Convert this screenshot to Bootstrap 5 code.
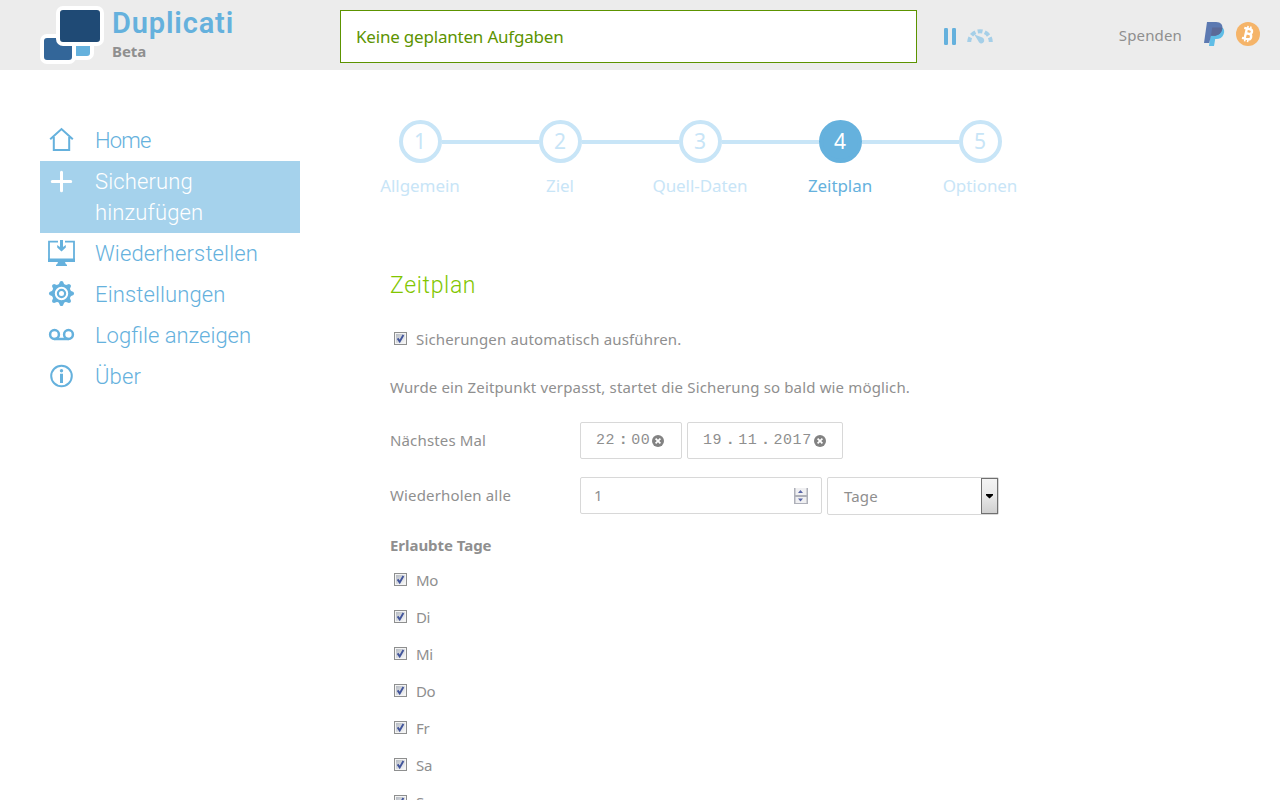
<!DOCTYPE html>
<html lang="de">
<head>
<meta charset="utf-8">
<meta name="viewport" content="width=device-width, initial-scale=1">
<title>Duplicati</title>
<link rel="stylesheet" href="https://cdn.jsdelivr.net/npm/bootstrap@5.3.0/dist/css/bootstrap.min.css">
<style>
body{font-family:"Noto Sans",sans-serif;font-size:15px;line-height:20px;letter-spacing:.15px;color:#8f8f8f;background:#fff;height:800px;overflow:hidden}
.topbar{height:70px;background:#ececec;padding-left:40px;padding-right:20px}
.brand-box{width:300px}
.brand-text{padding-top:7px}
.brand-name{font-family:Roboto,sans-serif;font-size:29px;line-height:32px;font-weight:600;color:#65b1dd;letter-spacing:.85px}
.brand-sub{line-height:18px;font-weight:700;margin-top:3px;letter-spacing:-.1px}
.status-box{width:577px;height:53px;margin-top:10px;border:1px solid #5c9300;background:#fff;color:#5c9300;font-size:17px;padding-left:15px;letter-spacing:-.2px}
.controls{margin:27px 0 0 27px;height:20px}
.donate{padding-top:22px;height:47px}
.donate-text{margin:3px 21px 0 0}
.side{width:260px;margin-left:40px;padding-top:50px;font-family:Roboto,sans-serif;font-size:22px;line-height:31px;font-weight:300;letter-spacing:.13px}
.side a{color:#65b1dd;padding:5px 8px;text-decoration:none;gap:20px}
.side a.active{background:#a5d2ec;color:#fff}
.side svg{width:27px;height:31px;flex:none}
.side .tight{letter-spacing:-.8px}
.side .snug{letter-spacing:0}
.content{margin-left:50px;width:700px;padding-top:50px}
.step{width:140px;color:#c8e5f7;font-size:17px;letter-spacing:-.06px}
.ring{width:43px;height:43px;border:4px solid #c8e5f7;border-radius:50%;font-size:21px;line-height:1;flex:none}
.wire{height:4px;background:#c8e5f7;flex:1 1 0}
.wire.blank{background:none}
.step.now{color:#65b1dd}
.now .ring{background:#65b1dd;border-color:#65b1dd;color:#fff}
.step-label{margin-top:13px}
.form-area{padding-left:40px;padding-top:74px}
h1{font-family:Roboto,sans-serif;font-size:23px;line-height:32px;font-weight:300;letter-spacing:.66px;color:#82c600;margin:0}
.auto-row{margin-top:27px}
.hint{margin:28px 0 25px}
.field-label{width:190px;padding-bottom:2px}
.box{border:1px solid #d8d8d8;border-radius:2px;height:37px;background:#fff}
.time-box{width:102px;padding-left:15px}
.date-box{width:156px;padding-left:15px;margin-left:5px}
.count-box{width:242px;padding:0 13px}
.unit-box{width:172px;height:38px;padding-left:16px;margin-left:5px}
.unit-box span,.count-box span{padding-bottom:1px}
.mono{font-family:"Liberation Mono",monospace;letter-spacing:.6px}
.mono>span{padding-top:1px}
.mono svg{margin-left:2px}
.sep{display:inline-block;width:16px;text-align:center;font-weight:700;letter-spacing:0}
.repeat-row{margin-top:18px;height:38px}
.days-title{margin:20px 0 8px;font-weight:700;letter-spacing:-.04px}
.tick{width:13px;height:13px;flex:none;margin:0 9px 2px 4px}
.day{height:37px;padding-bottom:4px;letter-spacing:-.35px}
.day .tick{margin-bottom:0}
</style>
<script src="https://cdn.jsdelivr.net/npm/bootstrap@5.3.0/dist/js/bootstrap.bundle.min.js"></script>
</head>
<body>
<svg width="0" height="0" class="position-absolute">
  <defs>
    <linearGradient id="bevel" x1="0" y1="0" x2="1" y2="1"><stop offset="0" stop-color="#b5bac2"/><stop offset="1" stop-color="#fafafa"/></linearGradient>
    <linearGradient id="btn" x1="0" y1="0" x2="0" y2="1"><stop offset="0" stop-color="#f4f4f4"/><stop offset=".5" stop-color="#e8e8e8"/><stop offset="1" stop-color="#cfcfcf"/></linearGradient>
    <symbol id="check" viewBox="0 0 13 13"><rect x=".5" y=".5" width="12" height="12" fill="#f4f4f4" stroke="#8e8f8f"/><rect x="2" y="2" width="9" height="9" fill="url(#bevel)"/><path d="M3.6 6.4 5.7 9.4 9.4 3" fill="none" stroke="#42559b" stroke-width="1.9"/></symbol>
    <symbol id="clear" viewBox="0 0 12 12"><circle cx="6" cy="6" r="6" fill="#828282"/><path d="m3.6 3.6 4.8 4.8m0-4.8-4.8 4.8" stroke="#fff" stroke-width="1.7"/></symbol>
  </defs>
</svg>
<header class="topbar d-flex">
  <div class="brand-box d-flex">
    <svg width="64" height="70" viewBox="0 0 64 70"><g stroke="#fff" stroke-width="4"><rect x="32" y="36" width="20" height="22" rx="5" fill="#65b1dd"/><rect x="2" y="36" width="32" height="26" rx="5" fill="#336699"/><rect x="18" y="8" width="44" height="36" rx="5" fill="#1f4a75"/></g></svg>
    <div class="brand-text ms-2"><div class="brand-name">Duplicati</div><div class="brand-sub">Beta</div></div>
  </div>
  <div class="status-box d-flex align-items-center">Keine geplanten Aufgaben</div>
  <div class="controls d-flex">
    <svg width="50" height="20" viewBox="0 0 50 20">
      <g fill="#65b1dd"><rect y="1" width="4" height="17" rx="1.3"/><rect x="8" y="1" width="4" height="17" rx="1.3"/></g>
      <path d="M25.2 15A10.8 10.8 0 0 1 46.8 15" fill="none" stroke="#a5cfe8" stroke-width="4" stroke-dasharray="4.9 2.35"/>
      <path d="M30.3 7.5 38.4 10.6A3 3 0 1 1 34.3 14Z" fill="#a5cfe8"/>
    </svg>
  </div>
  <div class="donate d-flex ms-auto">
    <span class="donate-text">Spenden</span>
    <svg width="57" height="24" viewBox="0 0 57 24">
      <path d="M19.5 5.5C21.5 7.5 21.5 10 20.5 12.5 19.3 15.5 16.8 17 13.3 17H12.2L11 24H6L8.2 8Z" fill="#5fbde6"/>
      <path d="M4 0H13C18 0 20 3 19.3 6.7 18.5 11.5 15.2 13.7 10.6 13.7H8L6.2 21H1Z" fill="#5c79b1"/>
      <path d="M9.2 5.5H18.8Q19.5 5.7 19.3 6.7C18.5 11.5 15.2 13.7 10.6 13.7H8Z" fill="#5b6a98"/>
      <circle cx="45" cy="12" r="12" fill="#f5b469"/>
      <g transform="rotate(13 45 12)" fill="none" stroke="#fff"><path d="M42.7 6.8V17.2M40 6.9H46A2.3 2.3 0 0 1 46 11.7H43M46 11.7A2.7 2.7 0 0 1 46 17.1H40" stroke-width="2.4"/><path d="M43.3 4V7M46.3 4V7M43.3 17V20M46.3 17V20" stroke-width="1.6"/></g>
    </svg>
  </div>
</header>
<div class="d-flex">
<nav class="side">
  <a href="#" class="d-flex"><svg viewBox="0 0 27 31"><path d="M2.2 14.3 13.5 4 24.8 14.3M5.8 12V25H21.2V12" fill="none" stroke="#65b1dd" stroke-width="2"/></svg><span class="tight">Home</span></a>
  <a href="#" class="d-flex active"><svg viewBox="0 0 27 31"><path d="M4.3 15.5H22.7M13.5 6.3V24.7" stroke="#fff" stroke-width="3" stroke-linecap="round"/></svg><span>Sicherung hinzufügen</span></a>
  <a href="#" class="d-flex"><svg viewBox="0 0 27 31"><path d="M10 3.7H1V22.5H26V3.7H17" fill="none" stroke="#65b1dd" stroke-width="1.8"/><path d="M0 20.5H27V24H0ZM10 24H17L18 26.5H19V28H8V26.5H9ZM12 2H15V9L17.8 7V9.5L13.5 13.5 9.2 9.5V7L12 9Z" fill="#65b1dd"/></svg><span>Wiederherstellen</span></a>
  <a href="#" class="d-flex"><svg viewBox="0 0 27 31"><g stroke="#65b1dd" fill="none"><circle cx="13.5" cy="14.5" r="8.2" stroke-width="3"/><circle cx="13.5" cy="14.5" r="3.6" stroke-width="2.2"/></g><g fill="#65b1dd"><g id="pair"><path id="tooth" d="M10.5 6 12 2.5Q13.5 1.3 15 2.5L16.5 6Z"/><use href="#tooth" transform="rotate(180 13.5 14.5)"/></g><use href="#pair" transform="rotate(45 13.5 14.5)"/><use href="#pair" transform="rotate(90 13.5 14.5)"/><use href="#pair" transform="rotate(135 13.5 14.5)"/></g></svg><span>Einstellungen</span></a>
  <a href="#" class="d-flex"><svg viewBox="0 0 27 31"><g fill="none" stroke="#65b1dd" stroke-width="2.5"><circle cx="6.5" cy="14.5" r="4.4"/><circle cx="20.5" cy="14.5" r="4.4"/><path d="M6.5 19H20.5"/></g></svg><span class="snug">Logfile anzeigen</span></a>
  <a href="#" class="d-flex"><svg viewBox="0 0 27 31"><circle cx="13.5" cy="15" r="10.3" fill="none" stroke="#65b1dd" stroke-width="2"/><path d="M12 12.7H15V22H12Z" fill="#65b1dd"/><circle cx="13.5" cy="9.8" r="1.7" fill="#65b1dd"/></svg><span>Über</span></a>
</nav>
<main class="content">
  <div class="d-flex text-center">
    <div class="step"><div class="d-flex align-items-center"><i class="wire blank"></i><div class="ring d-flex align-items-center justify-content-center">1</div><i class="wire"></i></div><div class="step-label">Allgemein</div></div>
    <div class="step"><div class="d-flex align-items-center"><i class="wire"></i><div class="ring d-flex align-items-center justify-content-center">2</div><i class="wire"></i></div><div class="step-label">Ziel</div></div>
    <div class="step"><div class="d-flex align-items-center"><i class="wire"></i><div class="ring d-flex align-items-center justify-content-center">3</div><i class="wire"></i></div><div class="step-label">Quell-Daten</div></div>
    <div class="step now"><div class="d-flex align-items-center"><i class="wire"></i><div class="ring d-flex align-items-center justify-content-center">4</div><i class="wire"></i></div><div class="step-label">Zeitplan</div></div>
    <div class="step"><div class="d-flex align-items-center"><i class="wire"></i><div class="ring d-flex align-items-center justify-content-center">5</div><i class="wire blank"></i></div><div class="step-label">Optionen</div></div>
  </div>
  <div class="form-area">
    <h1>Zeitplan</h1>
    <div class="auto-row d-flex align-items-center"><svg class="tick"><use href="#check"/></svg>Sicherungen automatisch ausführen.</div>
    <p class="hint">Wurde ein Zeitpunkt verpasst, startet die Sicherung so bald wie möglich.</p>
    <div class="d-flex align-items-center">
      <span class="field-label">Nächstes Mal</span>
      <div class="box time-box d-flex align-items-center mono"><span>22<span class="sep">:</span>00</span><svg width="12" height="12"><use href="#clear"/></svg></div>
      <div class="box date-box d-flex align-items-center mono"><span>19<span class="sep">.</span>11<span class="sep">.</span>2017</span><svg width="12" height="12"><use href="#clear"/></svg></div>
    </div>
    <div class="repeat-row d-flex">
      <span class="field-label align-self-center">Wiederholen alle</span>
      <div class="box count-box d-flex align-items-center justify-content-between"><span>1</span>
        <svg width="14" height="16" viewBox="0 0 14 16"><path d="M0 0H14V16H0Z" fill="#aeb0b9"/><path d="M1.5 0H12.5V7H1.5ZM1.5 9H12.5V15H1.5Z" fill="#f0f0f2"/><path d="M4 5 6.5 2 9 5ZM4 10.5H9L6.5 13.5Z" fill="#5966a8"/></svg></div>
      <div class="box unit-box d-flex align-items-center justify-content-between"><span>Tage</span>
        <svg width="17" height="36" viewBox="0 0 17 36"><rect x=".5" y=".5" width="16" height="35" fill="url(#btn)" stroke="#707070"/><path d="M5 16H12V17.3L8.5 20.5 5 17.3Z" fill="#000"/></svg></div>
    </div>
    <div class="days-title">Erlaubte Tage</div>
    <div class="day d-flex align-items-center"><svg class="tick"><use href="#check"/></svg>Mo</div>
    <div class="day d-flex align-items-center"><svg class="tick"><use href="#check"/></svg>Di</div>
    <div class="day d-flex align-items-center"><svg class="tick"><use href="#check"/></svg>Mi</div>
    <div class="day d-flex align-items-center"><svg class="tick"><use href="#check"/></svg>Do</div>
    <div class="day d-flex align-items-center"><svg class="tick"><use href="#check"/></svg>Fr</div>
    <div class="day d-flex align-items-center"><svg class="tick"><use href="#check"/></svg>Sa</div>
    <div class="day d-flex align-items-center"><svg class="tick"><use href="#check"/></svg>So</div>
  </div>
</main>
</div>
</body>
</html>
